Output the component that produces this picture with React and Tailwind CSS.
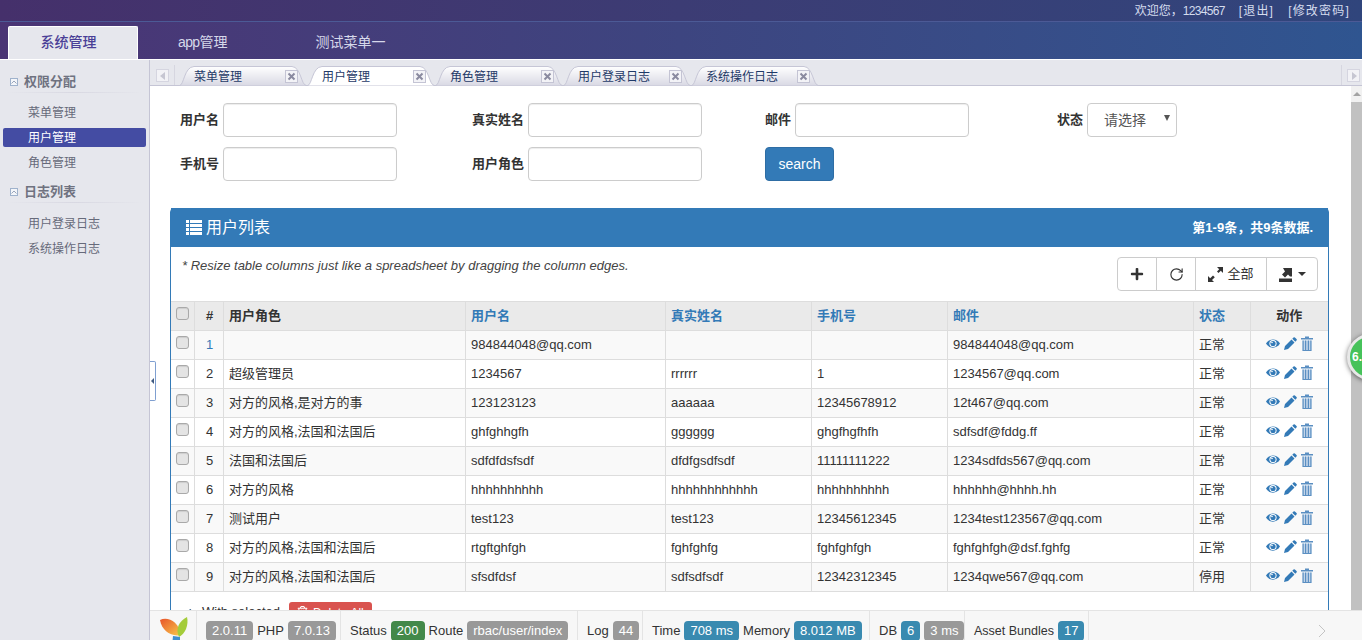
import React from 'react';
import { FaPlus, FaRegTrashAlt, FaLongArrowAltRight } from 'react-icons/fa';
import { RotateCw } from 'lucide-react';

const tabs = ['菜单管理', '用户管理', '角色管理', '用户登录日志', '系统操作日志'];

const columns = [
  { label: '用户角色', key: 'role', width: 242 },
  { label: '用户名', key: 'name', width: 200, link: true },
  { label: '真实姓名', key: 'real', width: 146, link: true },
  { label: '手机号', key: 'phone', width: 136, link: true },
  { label: '邮件', key: 'mail', width: 246, link: true },
  { label: '状态', key: 'status', width: 57, link: true },
];

const users = [
  { id: 1, role: '', name: '984844048@qq.com', real: '', phone: '', mail: '984844048@qq.com', status: '正常' },
  { id: 2, role: '超级管理员', name: '1234567', real: 'rrrrrr', phone: '1', mail: '1234567@qq.com', status: '正常' },
  { id: 3, role: '对方的风格,是对方的事', name: '123123123', real: 'aaaaaa', phone: '12345678912', mail: '12t467@qq.com', status: '正常' },
  { id: 4, role: '对方的风格,法国和法国后', name: 'ghfghhgfh', real: 'gggggg', phone: 'ghgfhgfhfh', mail: 'sdfsdf@fddg.ff', status: '正常' },
  { id: 5, role: '法国和法国后', name: 'sdfdfdsfsdf', real: 'dfdfgsdfsdf', phone: '11111111222', mail: '1234sdfds567@qq.com', status: '正常' },
  { id: 6, role: '对方的风格', name: 'hhhhhhhhhh', real: 'hhhhhhhhhhhh', phone: 'hhhhhhhhhh', mail: 'hhhhhh@hhhh.hh', status: '正常' },
  { id: 7, role: '测试用户', name: 'test123', real: 'test123', phone: '12345612345', mail: '1234test123567@qq.com', status: '正常' },
  { id: 8, role: '对方的风格,法国和法国后', name: 'rtgftghfgh', real: 'fghfghfg', phone: 'fghfghfgh', mail: 'fghfghfgh@dsf.fghfg', status: '正常' },
  { id: 9, role: '对方的风格,法国和法国后', name: 'sfsdfdsf', real: 'sdfsdfsdf', phone: '12342312345', mail: '1234qwe567@qq.com', status: '停用' },
];

const Check = () => (
  <div className="w-[13px] h-[13px] rounded-[3px] border border-[#a9a9a9] bg-[#e4e4e4] shadow-[inset_0_1px_1px_rgba(0,0,0,0.1)]" />
);

const FoldIcon = () => (
  <div className="w-2 h-2 border border-[#9fb2cc] bg-[#f4f6fa] flex items-center justify-center">
    <svg width="6" height="4" viewBox="0 0 6 4"><path d="M0.5 3.5 3 1l2.5 2.5" fill="none" stroke="#9aa6bb" /></svg>
  </div>
);

const CloseBox = () => (
  <div className="w-[13px] h-[13px] border border-[#c4c4d4] bg-[#f3f3f7] flex items-center justify-center">
    <svg width="9" height="9" viewBox="0 0 9 9"><path d="M1.5 1.5l6 6M7.5 1.5l-6 6" stroke="#8a8aa0" strokeWidth="2" /></svg>
  </div>
);

const Tab = ({ label, active }) => (
  <div className="relative w-[128px] h-5 shrink-0 text-xs text-[#1f3a68]">
    <svg className="absolute inset-0" width="128" height="20" viewBox="0 0 128 20">
      <defs>
        <linearGradient id="tabfill" x1="0" y1="0" x2="0" y2="1">
          <stop offset="0" stopColor="#ffffff" />
          <stop offset="1" stopColor="#d9d9e4" />
        </linearGradient>
      </defs>
      <path
        d="M0.5 19.5C5 19.5 5 1 15 0.5H113C122 1 122 19.5 127.5 19.5"
        fill={active ? '#ffffff' : 'url(#tabfill)'}
        stroke="#c6c6d6"
      />
    </svg>
    <span className="absolute left-[15px] top-[3px] leading-[17px]">{label}</span>
    <div className="absolute left-[106px] top-[4px]"><CloseBox /></div>
  </div>
);

const ScrollBtn = ({ dir }) => (
  <div className="w-[13px] h-[13px] border border-[#d5d5e0] bg-[#f2f2f6] flex items-center justify-center">
    <svg width="6" height="8" viewBox="0 0 6 8">
      <path d={dir === 'left' ? 'M5 0v8L0 4z' : 'M1 0v8l5-4z'} fill="#c6c6d2" />
    </svg>
  </div>
);

const Field = ({ label, children }) => (
  <div className="flex items-center gap-1">
    <span className="text-[13px] font-bold text-[#333] leading-none pb-[2px]">{label}</span>
    {children}
  </div>
);

const TextBox = () => (
  <input className="w-[174px] h-[34px] rounded border border-[#ccc] bg-white shadow-[inset_0_1px_1px_rgba(0,0,0,0.075)] outline-none" />
);

const Badge = ({ color = 'bg-[#999]', children }) => (
  <span className={`${color} text-white rounded-[4px] px-[6px] h-[20px] leading-[20px] inline-block whitespace-nowrap`}>{children}</span>
);

const ToolSeg = ({ width, children }) => (
  <div className={`${width} h-full flex items-start gap-[4px] pl-[9px] pt-[10px] border-r border-[#e4e4e4] shrink-0 leading-[20px] whitespace-nowrap`}>{children}</div>
);

// 动作图标
const EyeIcon = () => (
  <svg width="14" height="11" viewBox="0 0 14 11">
    <path d="M0 5.5C3 0 11 0 14 5.5 11 11 3 11 0 5.5z" fill="#337ab7" />
    <circle cx="7" cy="5.5" r="3.6" fill="#fff" />
    <circle cx="7" cy="5.5" r="2.6" fill="#337ab7" />
    <circle cx="6" cy="4.5" r="0.8" fill="#fff" />
  </svg>
);

const PencilIcon = () => (
  <svg width="13" height="13" viewBox="0 0 13 13">
    <path d="M0 13l1-4 6.5-6.5 3 3L4 12zM8.3 1.7 9.5.5a1 1 0 0 1 1.4 0l1.6 1.6a1 1 0 0 1 0 1.4l-1.2 1.2z" fill="#337ab7" />
  </svg>
);

const TrashIcon = () => (
  <svg width="12" height="15" viewBox="0 0 12 15">
    <path d="M4 2V0.5h4V2h4v1.5H0V2z" fill="#5b8fc2" />
    <path d="M1.5 4.5h9V15h-9z" fill="#c3d5e9" />
    <path d="M1.5 4.5h1.2V15H1.5zM4 4.5h1.2V15H4zM6.8 4.5H8V15H6.8zM9.3 4.5h1.2V15H9.3zM1.5 14h9v1h-9z" fill="#5b8fc2" />
  </svg>
);

export default function App() {
  return (
    <div className="relative h-screen overflow-hidden bg-[#e6e7ed] font-['Liberation_Sans','Noto_Sans_CJK_SC',sans-serif]">
      {/* 顶部 */}
      <div className="h-[60px] border-b border-white bg-gradient-to-r from-[#4a3474] via-[#3d4580] to-[#2f5590]">
        <div className="h-[21px] flex justify-end items-center gap-[14px] pr-[12px] text-xs text-[#d5dcee] bg-gradient-to-r from-[#45306b] via-[#3c3c74] to-[#30457c]">
          <span>欢迎您，<span className="tracking-[-0.7px]">1234567</span></span>
          <span className="tracking-[1.2px]">[退出]</span>
          <span className="tracking-[1.2px]">[修改密码]</span>
        </div>
        <div className="h-[38px] border-t border-[#4c5a96] flex items-end pl-2">
          <div className="w-[130px] h-[33px] pb-[2px] pr-[9px] bg-[#e6e7ed] border border-b-0 border-white rounded-t-[2px] flex items-center justify-center text-sm font-medium text-[#4a3f97]">系统管理</div>
          <div className="h-[33px] pb-[2px] ml-[40px] flex items-center text-sm text-[#d6d8ea]"><span className="tracking-[-0.6px]">app</span>管理</div>
          <div className="h-[33px] pb-[2px] ml-[88px] flex items-center text-sm text-[#d6d8ea]">测试菜单一</div>
        </div>
      </div>

      <div className="flex h-[580px]">
        {/* 左侧菜单 */}
        <div className="w-[150px] shrink-0 border-r border-[#c5c5d5] pt-[12px]">
          <div className="flex items-center gap-[6px] pl-[10px] h-5 text-[13px] font-bold text-[#6f7280]"><FoldIcon />权限分配</div>
          <div className="h-px mx-[6px] mb-[7px] bg-gradient-to-r from-[#e6e7ed] via-[#d8d8e2] to-[#e6e7ed]" />
          <div className="h-[25px] pl-[28px] flex items-center text-xs text-[#666a7a]">菜单管理</div>
          <div className="h-[19px] mx-[3px] my-[3px] pl-[25px] w-[143px] flex items-center text-xs text-white bg-[#444ca3] rounded-[2px]">用户管理</div>
          <div className="h-[25px] pl-[28px] flex items-center text-xs text-[#666a7a]">角色管理</div>
          <div className="flex items-center gap-[6px] pl-[10px] mt-[7px] h-5 text-[13px] font-bold text-[#6f7280]"><FoldIcon />日志列表</div>
          <div className="h-px mx-[6px] mb-[8px] bg-gradient-to-r from-[#e6e7ed] via-[#d8d8e2] to-[#e6e7ed]" />
          <div className="h-[25px] pl-[28px] flex items-center text-xs text-[#666a7a]">用户登录日志</div>
          <div className="h-[25px] pl-[28px] flex items-center text-xs text-[#666a7a]">系统操作日志</div>
        </div>

        {/* 主区域 */}
        <div className="flex-1 min-w-0 flex flex-col">
          <div className="h-[26px] shrink-0 border-b border-[#c5c5d5] flex items-end relative">
            <div className="self-start mt-[9px] ml-[6px] mr-[5px]"><ScrollBtn dir="left" /></div>
            <div className="self-stretch w-px mt-[5px] bg-white border-l border-[#d6d6e0] mr-[4px]" />
            <div className="flex -mb-px">
              {tabs.map((t) => <Tab key={t} label={t} active={t === '用户管理'} />)}
            </div>
            <div className="ml-auto self-stretch w-px mt-[5px] bg-[#d6d6e0] mr-[5px]" />
            <div className="self-start mt-[9px] mr-[2px]"><ScrollBtn dir="right" /></div>
          </div>

          <div className="flex-1 min-h-0 flex bg-white">
            <div className="flex-1 min-w-0 overflow-hidden">
              {/* 查询表单 */}
              <div className="pt-[17px] pl-[30px] grid grid-cols-[292px_293px_292px_1fr] gap-y-[10px]">
                <Field label="用户名"><TextBox /></Field>
                <Field label="真实姓名"><TextBox /></Field>
                <Field label="邮件"><TextBox /></Field>
                <Field label="状态">
                  <div className="relative w-[90px] h-[34px] rounded border border-[#ccc] flex items-center pl-4 text-sm text-[#555]">
                    请选择
                    <span className="absolute right-[6px] top-[11px] w-0 h-0 border-x-[3.5px] border-x-transparent border-t-[6px] border-t-[#555]" />
                  </div>
                </Field>
                <Field label="手机号"><TextBox /></Field>
                <Field label="用户角色"><TextBox /></Field>
                <div className="w-[69px] h-[34px] rounded border border-[#2e6da4] bg-[#337ab7] text-sm text-white flex items-center justify-center">search</div>
              </div>

              {/* 用户列表 */}
              <div className="mt-[27px] ml-[20px] mr-[21px] border border-[#337ab7] rounded-t h-[420px]">
                <div className="h-[39px] bg-[#337ab7] text-white flex items-center justify-between pl-[15px] pr-[15px] -mt-px">
                  <div className="flex items-center gap-[4px] text-base">
                    <svg width="16" height="15" viewBox="0 0 16 15" fill="#fff">
                      <path d="M0 0h3v3H0zM4 0h12v3H4zM0 4h3v3H0zM4 4h12v3H4zM0 8h3v3H0zM4 8h12v3H4zM0 12h3v3H0zM4 12h12v3H4z" />
                    </svg>
                    用户列表
                  </div>
                  <div className="text-[13px] font-bold">第1-9条，共9条数据.</div>
                </div>
                <div className="pt-[10px]">
                  <div className="flex justify-between pl-[11px] pr-[10px]">
                    <div className="text-[13px] italic text-[#444] -mt-px">* Resize table columns just like a spreadsheet by dragging the column edges.</div>
                    <div className="flex h-[34px] border border-[#ccc] rounded text-[#333] text-[13px]">
                      <div className="w-[39px] flex items-center justify-center border-r border-[#ccc]"><FaPlus size={14} /></div>
                      <div className="w-[39px] flex items-center justify-center border-r border-[#ccc]"><RotateCw size={15} strokeWidth={1.8} /></div>
                      <div className="w-[71px] flex items-center justify-center gap-[4px] border-r border-[#ccc]">
                        <svg width="15" height="15" viewBox="0 0 15 15" fill="#333">
                          <path d="M9 0h6v6l-2.2-2.2L10.5 6 9 4.5l2.2-2.3zM0 15V9l2.2 2.2L5 8.5 6.8 10.3 4 13l2 2z" />
                        </svg>
                        全部
                      </div>
                      <div className="w-[50px] flex items-center justify-center gap-[6px]">
                        <svg width="13" height="15" viewBox="0 0 13 15" fill="#333">
                          <path d="M0 11.5h13V15H0zM4 1h9v8.5H11L9 7.5 6 10.5 3 7.5 6 4.5z" />
                        </svg>
                        <span className="w-0 h-0 border-x-4 border-x-transparent border-t-4 border-t-[#333]" />
                      </div>
                    </div>
                  </div>

                  <table className="table-fixed border-collapse mt-[10px] w-[1157px] text-[13px] text-[#333]">
                    <colgroup>
                      <col className="w-[23px]" />
                      <col className="w-[29px]" />
                      {columns.map((c) => <col key={c.key} style={{ width: c.width }} />)}
                      <col className="w-[78px]" />
                    </colgroup>
                    <thead>
                      <tr className="h-[29px] bg-[#eaeaea] border-y border-[#ddd]">
                        <th className="border-r border-[#ddd] pl-[5px] pb-[6px]"><Check /></th>
                        <th className="border-x border-[#ddd] pl-[2px]">#</th>
                        {columns.map((c) => (
                          <th key={c.key} className={`border-x border-[#ddd] text-left pl-[5.5px] ${c.link ? 'text-[#337ab7]' : ''}`}>{c.label}</th>
                        ))}
                        <th className="border-l border-[#ddd]">动作</th>
                      </tr>
                    </thead>
                    <tbody>
                      {users.map((u) => (
                        <tr key={u.id} className={`h-[29px] border-b border-[#ddd] ${u.id % 2 ? 'bg-[#f9f9f9]' : 'bg-white'}`}>
                          <td className="border-r border-[#ddd] pl-[5px] pb-[6px]"><Check /></td>
                          <td className={`border-x border-[#ddd] text-center pl-[2px] ${u.id === 1 ? 'text-[#337ab7]' : ''}`}>{u.id}</td>
                          {columns.map((c) => (
                            <td key={c.key} className="border-x border-[#ddd] pl-[5.5px] whitespace-nowrap overflow-hidden">{u[c.key]}</td>
                          ))}
                          <td className="border-l border-[#ddd]">
                            <div className="flex items-center justify-center gap-[4px] pb-[4px] pl-[1px]">
                              <EyeIcon />
                              <PencilIcon />
                              <TrashIcon />
                            </div>
                          </td>
                        </tr>
                      ))}
                    </tbody>
                  </table>

                  <div className="flex items-start pl-[9px] pt-[10px] text-[13px] text-[#333]">
                    <FaLongArrowAltRight size={14} className="text-[#2c5a8a] mt-[3px]" />
                    <span className="ml-[8px] mt-[2px] leading-[16px]">With selected</span>
                    <div className="ml-[9px] h-[28px] w-[83px] rounded-[3px] bg-[#d9534f] text-white flex items-start gap-[5px] pl-2 pt-[3px] text-xs">
                      <FaRegTrashAlt size={11} className="mt-[1px]" />Delete All
                    </div>
                  </div>
                </div>
              </div>
            </div>

            {/* 滚动条 */}
            <div className="w-[12px] shrink-0 bg-[#f1f1f1] flex flex-col items-center border-l border-white">
              <div className="h-[16px] flex items-center">
                <span className="w-0 h-0 border-x-[4px] border-x-transparent border-b-[4px] border-b-[#a3a3a3]" />
              </div>
              <div className="w-full flex-1 bg-[#c1c1c1]" />
            </div>
          </div>
        </div>
      </div>

      {/* 侧栏收起把手 */}
      <div className="absolute left-[150px] top-[361px] w-[6px] h-[40px] bg-white border border-l-0 border-[#7f9fd0] rounded-r-[2px] flex items-center justify-center">
        <span className="w-0 h-0 border-y-[3px] border-y-transparent border-r-[3px] border-r-[#3f5a80]" />
      </div>

      {/* 右侧绿色球 */}
      <div className="absolute left-[1347px] top-[334px] w-[46px] h-[46px] rounded-full bg-[#46c25a] border-[3px] border-[#e8e8e8] shadow-[0_1px_5px_rgba(0,0,0,0.55)] flex items-center pl-[2px] text-xs font-bold text-white">6.</div>

      {/* 调试工具条 */}
      <div className="absolute left-[150px] right-0 bottom-0 h-[30px] bg-[#f7f7f7] border-t border-[#e4e4e4] flex items-center text-[13px] text-[#333]">
        <div className="w-[47px] h-full border-r border-[#e4e4e4] pl-[9px] pt-[6px] shrink-0 overflow-hidden">
          <svg width="30" height="30" viewBox="0 0 30 30">
            <defs>
              <linearGradient id="yiiorange" x1="0" y1="0" x2="1" y2="1">
                <stop offset="0" stopColor="#e8542a" />
                <stop offset="1" stopColor="#f8c84a" />
              </linearGradient>
            </defs>
            <path d="M1 3C8-1 20 4 22 18 12 20 3 14 1 3z" fill="url(#yiiorange)" />
            <path d="M28 0C30 8 26 17 20 20 16 12 20 4 28 0z" fill="#a4cc3a" />
            <path d="M14 19l7 1v9h-8z" fill="#3f8fd0" />
          </svg>
        </div>
        <ToolSeg width="w-[144px]">
          <Badge>2.0.11</Badge>PHP<Badge>7.0.13</Badge>
        </ToolSeg>
        <ToolSeg width="w-[237px]">
          Status<Badge color="bg-[#43894a]">200</Badge>Route<Badge>rbac/user/index</Badge>
        </ToolSeg>
        <ToolSeg width="w-[65px]">
          Log<Badge>44</Badge>
        </ToolSeg>
        <ToolSeg width="w-[227px]">
          Time<Badge color="bg-[#398ab0]">708 ms</Badge>Memory<Badge color="bg-[#398ab0]">8.012 MB</Badge>
        </ToolSeg>
        <ToolSeg width="w-[95px]">
          DB<Badge color="bg-[#398ab0]">6</Badge><Badge>3 ms</Badge>
        </ToolSeg>
        <ToolSeg width="w-[124px]">
          <span className="text-[12.5px]">Asset Bundles</span><Badge color="bg-[#398ab0]">17</Badge>
        </ToolSeg>
        <div className="ml-auto mr-[36px] pt-[10px]">
          <svg width="8" height="14" viewBox="0 0 8 14"><path d="M1 1l6 6-6 6" fill="none" stroke="#c4c4c4" /></svg>
        </div>
      </div>
    </div>
  );
}
